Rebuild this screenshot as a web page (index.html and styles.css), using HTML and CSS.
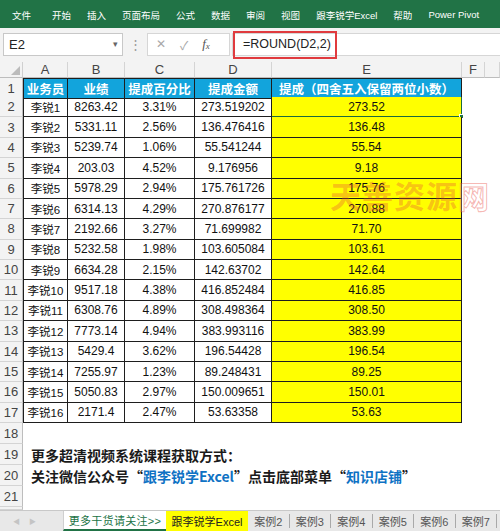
FILE: index.html
```html
<!DOCTYPE html>
<html lang="zh-CN">
<head>
<meta charset="utf-8">
<link rel="stylesheet" href="styles.css">
</head>
<body>
<div class="ribbon">
  <span class="rt first">文件</span><span class="rt">开始</span><span class="rt">插入</span><span class="rt">页面布局</span><span class="rt">公式</span><span class="rt">数据</span><span class="rt">审阅</span><span class="rt">视图</span><span class="rt">跟李锐学Excel</span><span class="rt">帮助</span><span class="rt">Power Pivot</span>
</div>
<div class="fbar">
  <div class="namebox"><span>E2</span><span class="caret">▾</span></div>
  <div class="dots">⋮</div>
  <div class="iconbox"><span class="ic x">✕</span><span class="ic ok">✓</span><span class="ic fx">f<sub>x</sub></span></div>
  <div class="formula"><span class="ftext">=ROUND(D2,2)</span><span class="redbox"></span></div>
</div>
<div class="sheet">
  <div class="row colhead">
    <div class="corner"><span class="tri"></span></div>
    <div class="ch">A</div><div class="ch">B</div><div class="ch">C</div><div class="ch">D</div><div class="ch">E</div><div class="ch">F</div><div class="ch last"></div>
  </div>
  <div class="row r1">
    <div class="rh">1</div>
    <div class="c h a">业务员</div><div class="c h">业绩</div><div class="c h">提成百分比</div><div class="c h">提成金额</div><div class="c h">提成（四舍五入保留两位小数）</div>
  </div>
  <div class="row"><div class="rh">2</div><div class="c a">李锐1</div><div class="c">8263.42</div><div class="c">3.31%</div><div class="c">273.519202</div><div class="c e sel">273.52<span class="handle"></span></div></div>
  <div class="row"><div class="rh">3</div><div class="c a">李锐2</div><div class="c">5331.11</div><div class="c">2.56%</div><div class="c">136.476416</div><div class="c e">136.48</div></div>
  <div class="row"><div class="rh">4</div><div class="c a">李锐3</div><div class="c">5239.74</div><div class="c">1.06%</div><div class="c">55.541244</div><div class="c e">55.54</div></div>
  <div class="row"><div class="rh">5</div><div class="c a">李锐4</div><div class="c">203.03</div><div class="c">4.52%</div><div class="c">9.176956</div><div class="c e">9.18</div></div>
  <div class="row"><div class="rh">6</div><div class="c a">李锐5</div><div class="c">5978.29</div><div class="c">2.94%</div><div class="c">175.761726</div><div class="c e">175.76</div></div>
  <div class="row"><div class="rh">7</div><div class="c a">李锐6</div><div class="c">6314.13</div><div class="c">4.29%</div><div class="c">270.876177</div><div class="c e">270.88</div></div>
  <div class="row"><div class="rh">8</div><div class="c a">李锐7</div><div class="c">2192.66</div><div class="c">3.27%</div><div class="c">71.699982</div><div class="c e">71.70</div></div>
  <div class="row"><div class="rh">9</div><div class="c a">李锐8</div><div class="c">5232.58</div><div class="c">1.98%</div><div class="c">103.605084</div><div class="c e">103.61</div></div>
  <div class="row"><div class="rh">10</div><div class="c a">李锐9</div><div class="c">6634.28</div><div class="c">2.15%</div><div class="c">142.63702</div><div class="c e">142.64</div></div>
  <div class="row"><div class="rh">11</div><div class="c a">李锐10</div><div class="c">9517.18</div><div class="c">4.38%</div><div class="c">416.852484</div><div class="c e">416.85</div></div>
  <div class="row"><div class="rh">12</div><div class="c a">李锐11</div><div class="c">6308.76</div><div class="c">4.89%</div><div class="c">308.498364</div><div class="c e">308.50</div></div>
  <div class="row"><div class="rh">13</div><div class="c a">李锐12</div><div class="c">7773.14</div><div class="c">4.94%</div><div class="c">383.993116</div><div class="c e">383.99</div></div>
  <div class="row"><div class="rh">14</div><div class="c a">李锐13</div><div class="c">5429.4</div><div class="c">3.62%</div><div class="c">196.54428</div><div class="c e">196.54</div></div>
  <div class="row"><div class="rh">15</div><div class="c a">李锐14</div><div class="c">7255.97</div><div class="c">1.23%</div><div class="c">89.248431</div><div class="c e">89.25</div></div>
  <div class="row"><div class="rh">16</div><div class="c a">李锐15</div><div class="c">5050.83</div><div class="c">2.97%</div><div class="c">150.009651</div><div class="c e">150.01</div></div>
  <div class="row"><div class="rh">17</div><div class="c a">李锐16</div><div class="c">2171.4</div><div class="c">2.47%</div><div class="c">53.63358</div><div class="c e">53.63</div></div>
  <div class="row tall"><div class="rh">18</div></div>
  <div class="row tall"><div class="rh">19</div><div class="note">更多超清视频系统课程获取方式：</div></div>
  <div class="row tall"><div class="rh">20</div><div class="note">关注微信公众号“<span class="blue">跟李锐学Excel</span>”点击底部菜单“<span class="blue">知识店铺</span>”</div></div>
  <div class="row tall"><div class="rh">21</div></div>
  <div class="row stub"><div class="rh"></div></div>
  <div class="watermark">天善资源<span class="wm-last">网</span></div>
</div>
<div class="tabs">
  <div class="nav"><span>◀</span><span>▶</span></div>
  <div class="tab t1">更多干货请关注&gt;&gt;</div>
  <div class="tab t2">跟李锐学Excel</div>
  <div class="tab tc">案例2</div>
  <div class="tab tc">案例3</div>
  <div class="tab tc">案例4</div>
  <div class="tab tc">案例5</div>
  <div class="tab tc">案例6</div>
  <div class="tab tc">案例7</div>
</div>
</body>
</html>
```
FILE: styles.css
```css
* { box-sizing: border-box; }
body {
  margin: 0;
  width: 500px;
  height: 531px;
  overflow: hidden;
  background: #fff;
  font-family: "Liberation Sans", "Noto Sans CJK SC", sans-serif;
  color: #111;
}
.ribbon {
  height: 28px;
  background: #217346;
  display: flex;
  align-items: center;
  gap: 16px;
  padding: 1px 0 0 12px;
  color: #fff;
  font-size: 9.5px;
  font-family: "Liberation Sans", "Noto Sans CJK SC", sans-serif;
  white-space: nowrap;
}
.ribbon .first { margin-right: 5px; }
.fbar {
  height: 34px;
  background: #f3f3f3;
  display: flex;
  align-items: center;
  padding-bottom: 2px;
}
.namebox {
  margin-left: 3px;
  width: 120px;
  height: 23px;
  background: #fff;
  border: 1px solid #c8c8c8;
  display: flex;
  align-items: center;
  justify-content: space-between;
  padding: 0 4px 0 5px;
  font-size: 13px;
  color: #222;
}
.namebox .caret { font-size: 9px; color: #666; }
.dots {
  width: 24px;
  text-align: center;
  color: #9a9a9a;
  font-size: 13px;
}
.iconbox {
  width: 83px;
  height: 23px;
  background: #fff;
  border: 1px solid #d6d6d6;
  display: flex;
  align-items: center;
  padding-left: 8px;
  gap: 14px;
}
.ic { color: #a8a8a8; font-size: 12px; }
.ic.fx {
  color: #555;
  font-family: "Liberation Serif", serif;
  font-style: italic;
  font-size: 13px;
}
.ic.fx sub { font-size: 9px; vertical-align: -1px; }
.formula {
  position: relative;
  flex: 1;
  height: 23px;
  margin-left: 2px;
  background: #fff;
  border: 1px solid #d6d6d6;
  border-right: none;
  display: flex;
  align-items: center;
  padding-left: 10px;
  font-size: 12.5px;
  color: #222;
}
.redbox {
  position: absolute;
  left: 0;
  top: -3px;
  width: 104px;
  height: 28px;
  border: 2px solid #e03a3e;
}
.sheet { position: relative; }
.row {
  display: grid;
  grid-template-columns: 23px 45px 57px 70px 77px 190px 23px 1fr;
  height: 20.375px;
  font-size: 12px;
}
.row.colhead { height: 16px; }
.row.r1 { height: 19px; }
.row.tall { height: 21px; }
.row.stub { height: 3px; }
.corner {
  position: relative;
  background: #f3f3f3;
  border-right: 1px solid #d0d0d0;
  border-bottom: 1px solid #bdbdbd;
}
.tri {
  position: absolute;
  right: 2px;
  bottom: 2px;
  width: 0;
  height: 0;
  border-left: 9px solid transparent;
  border-bottom: 9px solid #bcbcbc;
}
.ch {
  background: #f3f3f3;
  border-right: 1px solid #d4d4d4;
  border-bottom: 1px solid #bdbdbd;
  text-align: center;
  font-size: 13px;
  line-height: 15px;
  color: #444;
}
.rh {
  background: #f3f3f3;
  border-right: 1px solid #bdbdbd;
  border-bottom: 1px solid #d4d4d4;
  display: flex;
  align-items: center;
  justify-content: center;
  font-size: 13px;
  color: #444;
}
.c {
  position: relative;
  border-right: 1px solid #1e1e1e;
  border-bottom: 1px solid #1e1e1e;
  display: flex;
  align-items: center;
  justify-content: center;
  white-space: nowrap;
  color: #111;
}
.c.a { border-left: 1px solid #1e1e1e; font-size: 11.5px; }
.c.h {
  background: #12a4dc;
  color: #fff;
  font-weight: bold;
  font-size: 12.5px;
  border-top: 1px solid #1e1e1e;
}
.c.e { background: #ffff00; }
.c.sel { border-right-color: #1d6b3e; border-bottom-color: #1d6b3e; }
.handle {
  position: absolute;
  right: -3px;
  bottom: -3px;
  width: 5px;
  height: 5px;
  background: #217346;
  border: 1px solid #fff;
}
.note {
  grid-column: 2 / -1;
  display: flex;
  align-items: center;
  padding-left: 8px;
  font-size: 14px;
  font-weight: bold;
  color: #1a1a1a;
  white-space: nowrap;
  font-family: "Noto Sans CJK SC", "Liberation Sans", sans-serif;
}
.blue { color: #0f72c4; }
.watermark {
  position: absolute;
  left: 330px;
  top: 110px;
  font-size: 31px;
  font-weight: bold;
  letter-spacing: 1px;
  color: rgba(232, 70, 60, 0.32);
  font-family: "Noto Sans CJK SC", sans-serif;
  pointer-events: none;
  white-space: nowrap;
}
.wm-last {
  color: rgba(255, 255, 255, 0.2);
  -webkit-text-stroke: 1px rgba(232, 70, 60, 0.4);
}
.tabs {
  height: 21px;
  background: #e8e8e8;
  border-top: 1px solid #c8c8c8;
  display: flex;
  align-items: stretch;
  font-size: 11px;
  font-family: "Liberation Sans", "Noto Sans CJK SC", sans-serif;
}
.nav {
  width: 63px;
  display: flex;
  align-items: center;
  gap: 9px;
  padding-left: 13px;
  color: #c4c4c4;
  font-size: 7px;
}
.tab {
  display: flex;
  align-items: center;
  justify-content: center;
  white-space: nowrap;
}
.t1 {
  width: 103px;
  background: #fff;
  color: #217346;
  border-bottom: 2px solid #217346;
  border-left: 1px solid #cfcfcf;
  letter-spacing: 0.3px;
}
.t2 {
  width: 82px;
  background: #ffff00;
  color: #222;
}
.tc {
  width: 41.5px;
  color: #555;
  border-right: 1px solid #a9a9a9;
  margin: 3px 0;
}
```
